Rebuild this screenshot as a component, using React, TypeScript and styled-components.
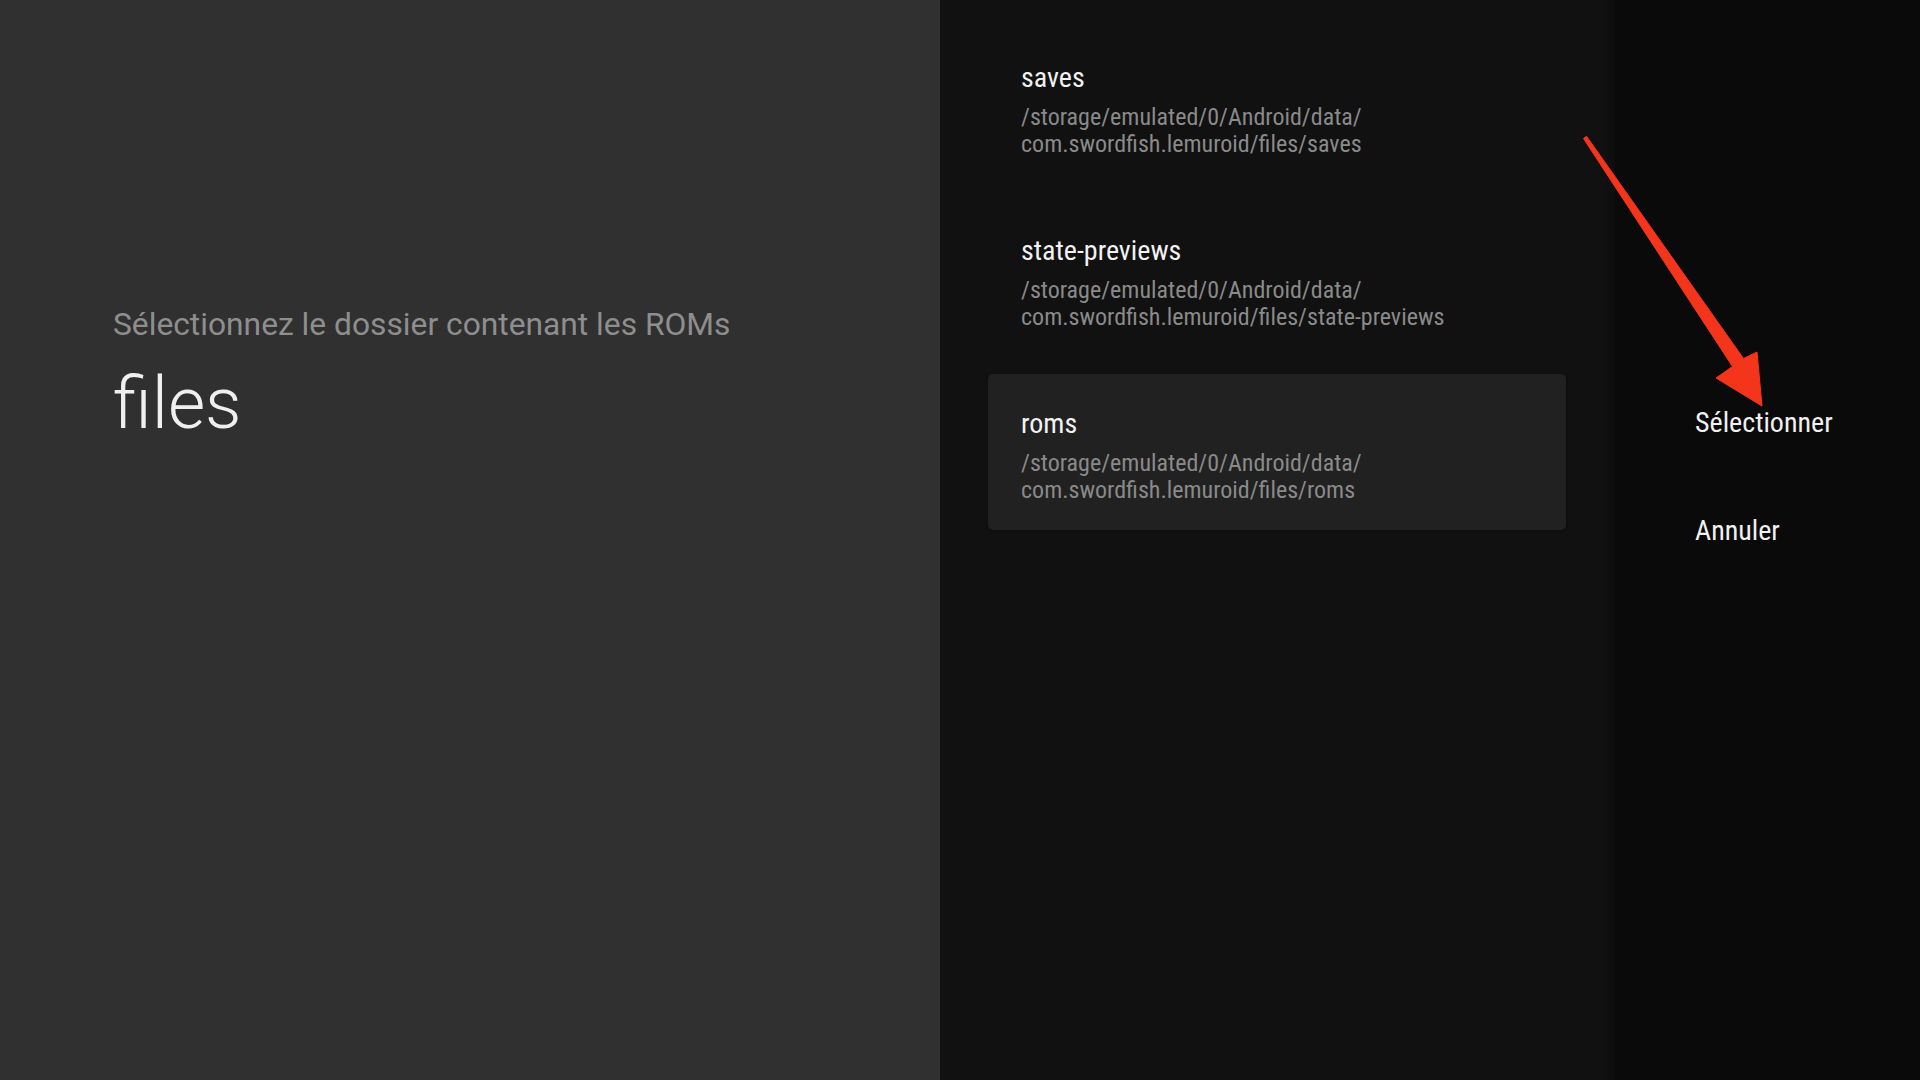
import React from "react";
import styled, { createGlobalStyle } from "styled-components";

const GlobalStyle = createGlobalStyle`
  html, body {
    margin: 0;
    padding: 0;
    background: #0a0a0a;
  }
  body {
    font-family: "Roboto Condensed", Roboto, "Liberation Sans", sans-serif;
    font-stretch: 75%;
    -webkit-font-smoothing: antialiased;
  }
`;

const Screen = styled.div`
  position: relative;
  display: grid;
  grid-template-columns: 940px 675px 1fr;
  width: 1920px;
  height: 1080px;
  overflow: hidden;
`;

const GuidancePanel = styled.section`
  background: #303030;
  display: flex;
  flex-direction: column;
  padding: 305px 0 0 113px;
  box-sizing: border-box;
`;

const Breadcrumb = styled.div`
  font-family: Roboto, "Liberation Sans", sans-serif;
  font-stretch: 100%;
  font-size: 31.75px;
  line-height: 40px;
  color: #8e8e8e;
`;

const GuidanceTitle = styled.h1`
  margin: 23px 0 0;
  font-family: Roboto, "Liberation Sans", sans-serif;
  font-stretch: 100%;
  font-size: 72px;
  line-height: 72px;
  font-weight: 300;
  color: #efefef;
`;

const ActionsPanel = styled.section`
  background: #111111;
  display: flex;
  flex-direction: column;
  gap: 17px;
  padding: 28px 49px 0 48px;
  box-sizing: border-box;
`;

const ActionItem = styled.div<{ $focused?: boolean }>`
  display: flex;
  flex-direction: column;
  gap: 9px;
  padding: 33px 33px 26px;
  border-radius: 5px;
  background: ${(p) => (p.$focused ? "#212121" : "transparent")};
  box-shadow: ${(p) => (p.$focused ? "0 1px 3px rgba(0,0,0,0.35)" : "none")};
`;

const ActionTitle = styled.div`
  font-size: 28px;
  line-height: 34px;
  color: #f2f2f2;
`;

const ActionPath = styled.div`
  font-size: 24px;
  line-height: 27px;
  color: #8a8a8a;
`;

const ButtonPanel = styled.section`
  background: #0a0a0a;
  display: flex;
  flex-direction: column;
  gap: 74px;
  padding: 406px 0 0 80px;
  box-sizing: border-box;
  box-shadow: -3px 0 6px rgba(0, 0, 0, 0.25);
`;

const ButtonAction = styled.div`
  font-size: 28px;
  line-height: 34px;
  color: #f0f0f0;
`;

const ArrowOverlay = styled.svg`
  position: absolute;
  left: 1570px;
  top: 125px;
  width: 210px;
  height: 300px;
  pointer-events: none;
`;

const actions = [
  { title: "saves", path: ["/storage/emulated/0/Android/data/", "com.swordfish.lemuroid/files/saves"] },
  {
    title: "state-previews",
    path: ["/storage/emulated/0/Android/data/", "com.swordfish.lemuroid/files/state-previews"],
  },
  { title: "roms", path: ["/storage/emulated/0/Android/data/", "com.swordfish.lemuroid/files/roms"], focused: true },
];

export default function App() {
  return (
    <>
      <GlobalStyle />
      <Screen>
        <GuidancePanel>
          <Breadcrumb>Sélectionnez le dossier contenant les ROMs</Breadcrumb>
          <GuidanceTitle>files</GuidanceTitle>
        </GuidancePanel>
        <ActionsPanel>
          {actions.map((a) => (
            <ActionItem key={a.title} $focused={a.focused}>
              <ActionTitle>{a.title}</ActionTitle>
              <ActionPath>
                {a.path[0]}
                <br />
                {a.path[1]}
              </ActionPath>
            </ActionItem>
          ))}
        </ActionsPanel>
        <ButtonPanel>
          <ButtonAction>Sélectionner</ButtonAction>
          <ButtonAction>Annuler</ButtonAction>
        </ButtonPanel>
        <ArrowOverlay viewBox="1570 125 210 300">
          <path
            d="M1583.5 138.5 L1586.5 136.2 L1743.5 358.5 L1757 352 L1762 406 L1716 378 L1732.5 366.5 Z"
            fill="#f5341c"
            stroke="#f5341c"
            strokeWidth="1"
            strokeLinejoin="round"
          />
        </ArrowOverlay>
      </Screen>
    </>
  );
}
